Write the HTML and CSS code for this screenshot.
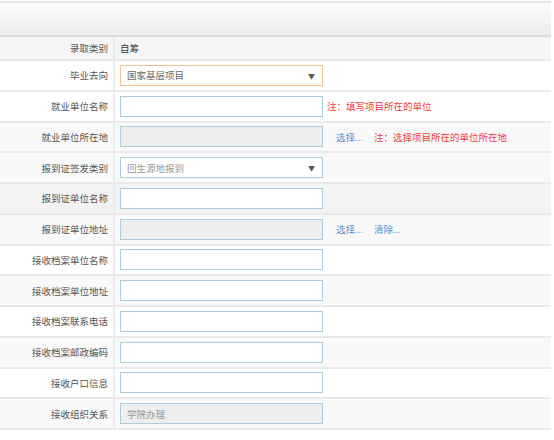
FILE: index.html
```html
<!DOCTYPE html>
<html>
<head>
    <title>就业信息登记</title>
    <link rel="stylesheet" href="styles.css">
</head>
<body>
    <div class="panel">
        <div class="panel-head"></div>

        <div class="row row-first stripe">
            <div class="label">录取类别</div>
            <div class="field"><span class="value">自筹</span></div>
        </div>

        <div class="row">
            <div class="label">毕业去向</div>
            <div class="field">
                <div class="select focus">国家基层项目</div>
            </div>
        </div>

        <div class="row">
            <div class="label">就业单位名称</div>
            <div class="field">
                <input class="text" type="text">
                <span class="note note-tight">注：填写项目所在的单位</span>
            </div>
        </div>

        <div class="row stripe">
            <div class="label">就业单位所在地</div>
            <div class="field">
                <input class="text" type="text" disabled>
                <a class="link" href="#">选择...</a>
                <span class="note">注：选择项目所在的单位所在地</span>
            </div>
        </div>

        <div class="row stripe">
            <div class="label">报到证签发类别</div>
            <div class="field">
                <div class="select muted">回生源地报到</div>
            </div>
        </div>

        <div class="row stripe-dark">
            <div class="label">报到证单位名称</div>
            <div class="field"><input class="text" type="text"></div>
        </div>

        <div class="row stripe">
            <div class="label">报到证单位地址</div>
            <div class="field">
                <input class="text" type="text" disabled>
                <a class="link" href="#">选择...</a>
                <a class="link" href="#">清除...</a>
            </div>
        </div>

        <div class="row">
            <div class="label">接收档案单位名称</div>
            <div class="field"><input class="text" type="text"></div>
        </div>

        <div class="row stripe">
            <div class="label">接收档案单位地址</div>
            <div class="field"><input class="text" type="text"></div>
        </div>

        <div class="row">
            <div class="label">接收档案联系电话</div>
            <div class="field"><input class="text" type="text"></div>
        </div>

        <div class="row stripe">
            <div class="label">接收档案邮政编码</div>
            <div class="field"><input class="text" type="text"></div>
        </div>

        <div class="row">
            <div class="label">接收户口信息</div>
            <div class="field"><input class="text" type="text"></div>
        </div>

        <div class="row stripe">
            <div class="label">接收组织关系</div>
            <div class="field"><input class="text" type="text" value="学院办理" disabled></div>
        </div>
    </div>
</body>
</html>
```

FILE: styles.css
```css
* {
    margin: 0;
    padding: 0;
    box-sizing: border-box;
}

body {
    background: #fff;
    font-family: "Noto Sans CJK SC", "Noto Sans", sans-serif;
    font-size: 9.5px;
    color: #555;
    padding-top: 1px;
}

.panel {
    width: 551px;
}

.panel-head {
    height: 36px;
    border-top: 2px solid #e4e4e4;
    border-bottom: 2px solid #dedede;
    background: linear-gradient(to bottom, #fbfbfb 0%, #ececec 100%);
}

.row {
    display: grid;
    grid-template-columns: 115px 1fr;
    height: 30.75px;
    border-bottom: 2px solid #e9e9e9;
    background: #fff;
}

.row-first {
    height: 24px;
}

.stripe {
    background: #f9f9f9;
}

.row-first.stripe {
    background: #f6f6f6;
}

.stripe-dark {
    background: #f3f3f3;
}

.label {
    display: flex;
    align-items: center;
    justify-content: flex-end;
    padding-right: 5px;
    border-right: 2px solid #ececec;
    color: #555;
    white-space: nowrap;
}

.field {
    display: flex;
    align-items: center;
    padding-left: 5px;
}

.value {
    color: #333;
}

.text,
.select {
    width: 203px;
    height: 21px;
    border: 1px solid #a9cfdc;
    background: #fff;
    font-family: inherit;
    font-size: 9.5px;
    color: #999;
    padding: 0 6px;
    outline: none;
}

.text:disabled {
    background: #eeeeee;
}

.select {
    position: relative;
    display: flex;
    align-items: center;
    color: #666;
}

.select::after {
    content: "\25BC";
    position: absolute;
    right: 7px;
    top: 5px;
    font-size: 7px;
    color: #555;
}

.select.focus {
    border-color: #f5c493;
}

.select.muted {
    color: #999;
}

.link {
    color: #5d8fcf;
    text-decoration: none;
    margin-left: 13px;
}

.link + .link {
    margin-left: 11px;
}

.note {
    color: #f23a3a;
    margin-left: 11px;
}

.note-tight {
    margin-left: 4px;
}
```
